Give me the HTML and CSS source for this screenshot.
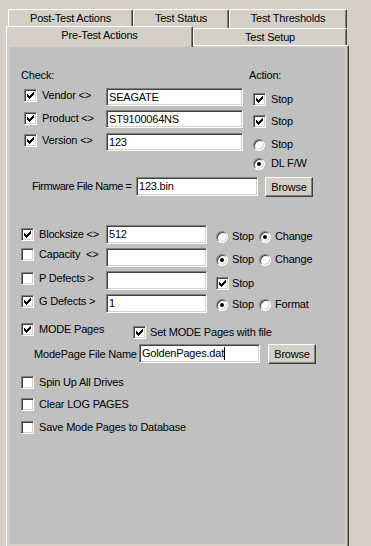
FILE: index.html
```html
<!DOCTYPE html>
<html lang="en">
<head>
    <meta charset="UTF-8">
    <meta name="viewport" content="width=device-width, initial-scale=1.0">
    <title>Pre-Test Actions</title>
    <link rel="stylesheet" href="styles.css">
</head>
<body>
    <!-- tab strip, two rows -->
    <div class="tabs">
        <div class="tabRow backRow">
            <div class="tab tabPost">Post-Test Actions</div>
            <div class="tab tabStatus">Test Status</div>
            <div class="tab tabThresh">Test Thresholds</div>
        </div>
        <div class="tabRow frontRow">
            <div class="tab tabPre selected">Pre-Test Actions</div>
            <div class="tab tabSetup">Test Setup</div>
        </div>
    </div>

    <div class="panel">
        <div class="inner">

            <!-- inquiry checks -->
            <div class="row head">
                <span class="headCheck">Check:</span>
                <span>Action:</span>
            </div>

            <div class="row idRow h22">
                <div class="chk w82 m1"><span class="cb"><svg class="tick" width="11" height="11" viewBox="0 0 11 11"><path d="M2 4h1v3H2zM3 5h1v3H3zM4 6h1v3H4zM5 5h1v3H5zM6 4h1v3H6zM7 3h1v3H7zM8 2h1v3H8z"/></svg></span>Vendor &lt;&gt;</div>
                <div class="field f137 fh18">SEAGATE</div>
                <div class="chk act m5"><span class="cb"><svg class="tick" width="11" height="11" viewBox="0 0 11 11"><path d="M2 4h1v3H2zM3 5h1v3H3zM4 6h1v3H4zM5 5h1v3H5zM6 4h1v3H6zM7 3h1v3H7zM8 2h1v3H8z"/></svg></span>Stop</div>
            </div>
            <div class="row idRow h23">
                <div class="chk w82 m2"><span class="cb"><svg class="tick" width="11" height="11" viewBox="0 0 11 11"><path d="M2 4h1v3H2zM3 5h1v3H3zM4 6h1v3H4zM5 5h1v3H5zM6 4h1v3H6zM7 3h1v3H7zM8 2h1v3H8z"/></svg></span>Product &lt;&gt;</div>
                <div class="field f137 fh18">ST9100064NS</div>
                <div class="chk act m5"><span class="cb"><svg class="tick" width="11" height="11" viewBox="0 0 11 11"><path d="M2 4h1v3H2zM3 5h1v3H3zM4 6h1v3H4zM5 5h1v3H5zM6 4h1v3H6zM7 3h1v3H7zM8 2h1v3H8z"/></svg></span>Stop</div>
            </div>
            <div class="row idRow h22">
                <div class="chk w82 m1"><span class="cb"><svg class="tick" width="11" height="11" viewBox="0 0 11 11"><path d="M2 4h1v3H2zM3 5h1v3H3zM4 6h1v3H4zM5 5h1v3H5zM6 4h1v3H6zM7 3h1v3H7zM8 2h1v3H8z"/></svg></span>Version &lt;&gt;</div>
                <div class="field f137 fh18">123</div>
                <div class="chk radio act m5"><span class="rb"></span>Stop</div>
            </div>
            <div class="row dlRow h22">
                <div class="chk radio m2"><span class="rb on"></span>DL F/W</div>
            </div>

            <div class="row fwRow h20">
                <span class="w104 m3 narrow">Firmware File Name =</span>
                <div class="field f122 fh19">123.bin</div>
                <button class="btn ml7">Browse</button>
            </div>

            <!-- drive parameters -->
            <div class="devSect">
                <div class="row devRow h23">
                    <div class="chk w85 m3"><span class="cb"><svg class="tick" width="11" height="11" viewBox="0 0 11 11"><path d="M2 4h1v3H2zM3 5h1v3H3zM4 6h1v3H4zM5 5h1v3H5zM6 4h1v3H6zM7 3h1v3H7zM8 2h1v3H8z"/></svg></span>Blocksize &lt;&gt;</div>
                    <div class="field f101 fh19">512</div>
                    <div class="opts m5">
                        <div class="chk radio opt1"><span class="rb"></span>Stop</div>
                        <div class="chk radio opt2"><span class="rb on"></span>Change</div>
                    </div>
                </div>
                <div class="row devRow h23">
                    <div class="chk w85"><span class="cb"></span>Capacity&nbsp; &lt;&gt;</div>
                    <div class="field f101 fh19"></div>
                    <div class="opts m5">
                        <div class="chk radio opt1"><span class="rb on"></span>Stop</div>
                        <div class="chk radio opt2"><span class="rb"></span>Change</div>
                    </div>
                </div>
                <div class="row devRow h23">
                    <div class="chk w85 m1"><span class="cb"></span>P Defects &gt;</div>
                    <div class="field f101 fh19"></div>
                    <div class="opts m6">
                        <div class="chk tight"><span class="cb"><svg class="tick" width="11" height="11" viewBox="0 0 11 11"><path d="M2 4h1v3H2zM3 5h1v3H3zM4 6h1v3H4zM5 5h1v3H5zM6 4h1v3H6zM7 3h1v3H7zM8 2h1v3H8z"/></svg></span>Stop</div>
                    </div>
                </div>
                <div class="row devRow h29">
                    <div class="chk w85 m1"><span class="cb"><svg class="tick" width="11" height="11" viewBox="0 0 11 11"><path d="M2 4h1v3H2zM3 5h1v3H3zM4 6h1v3H4zM5 5h1v3H5zM6 4h1v3H6zM7 3h1v3H7zM8 2h1v3H8z"/></svg></span>G Defects &gt;</div>
                    <div class="field f101 fh19">1</div>
                    <div class="opts m4">
                        <div class="chk radio opt1"><span class="rb on"></span>Stop</div>
                        <div class="chk radio opt2"><span class="rb"></span>Format</div>
                    </div>
                </div>

                <div class="row devRow h21">
                    <div class="chk w112"><span class="cb"><svg class="tick" width="11" height="11" viewBox="0 0 11 11"><path d="M2 4h1v3H2zM3 5h1v3H3zM4 6h1v3H4zM5 5h1v3H5zM6 4h1v3H6zM7 3h1v3H7zM8 2h1v3H8z"/></svg></span>MODE Pages</div>
                    <div class="chk g4 m3"><span class="cb"><svg class="tick" width="11" height="11" viewBox="0 0 11 11"><path d="M2 4h1v3H2zM3 5h1v3H3zM4 6h1v3H4zM5 5h1v3H5zM6 4h1v3H6zM7 3h1v3H7zM8 2h1v3H8z"/></svg></span>Set MODE Pages with file</div>
                </div>
                <div class="row modeFileRow h21">
                    <span class="w105 m4">ModePage File Name</span>
                    <div class="field f121 fh19">GoldenPages.dat<span class="caret"></span></div>
                    <button class="btn ml8">Browse</button>
                </div>

                <div class="row devRow h22 spin">
                    <div class="chk"><span class="cb"></span>Spin Up All Drives</div>
                </div>
                <div class="row devRow h23">
                    <div class="chk"><span class="cb"></span>Clear LOG PAGES</div>
                </div>
                <div class="row devRow h23">
                    <div class="chk"><span class="cb"></span>Save Mode Pages to Database</div>
                </div>
            </div>

        </div>
    </div>
</body>
</html>
```

FILE: styles.css
```css
body {
    margin: 0;
    height: 546px;
    overflow: hidden;
    background: #d4d0c8;
    color: #000;
    font: 11px "Liberation Sans", Arial, sans-serif;
    letter-spacing: -0.2px;
}

/* tabs */
.tabs {
    padding-top: 9px;
}
.tabRow {
    display: flex;
}
.backRow {
    padding-left: 8px;
    height: 19px;
}
.frontRow {
    padding-left: 6px;
    height: 19px;
    margin-top: -2px;
    align-items: flex-end;
}
.tab {
    box-sizing: border-box;
    background: #d4d0c8;
    border: 1px solid #fff;
    border-right-color: #404040;
    border-bottom: none;
    border-radius: 2px 2px 0 0;
    box-shadow: inset -1px 0 #808080;
    text-align: center;
    line-height: 13px;
    white-space: nowrap;
}
.backRow .tab {
    height: 19px;
    padding-top: 2px;
}
.tabPost { width: 125px; }
.tabStatus { width: 96px; }
.tabThresh { width: 118px; }
.tabPre {
    width: 187px;
    height: 21px;
    padding-top: 2px;
    margin-bottom: -2px;
    position: relative;
    z-index: 1;
}
.tabSetup {
    width: 154px;
    height: 17px;
    padding-top: 2px;
}

/* page frame */
.panel {
    margin-left: 6px;
    width: 343px;
    box-sizing: border-box;
    border-top: 1px solid #fff;
    border-left: 1px solid #fff;
    border-right: 1px solid #404040;
    box-shadow: inset -1px 0 #808080;
    padding: 1px 3px 3px 3px;
}
.inner {
    background: #c0c0c0;
    height: 497px;
    box-sizing: border-box;
    padding-top: 21px;
}

/* rows */
.row {
    display: flex;
    align-items: flex-start;
    white-space: nowrap;
}
.h20 { height: 20px; }
.h21 { height: 21px; }
.h22 { height: 22px; }
.h23 { height: 23px; }
.h29 { height: 29px; }
.m1 { margin-top: 1px; }
.m2 { margin-top: 2px; }
.m3 { margin-top: 3px; }
.m4 { margin-top: 4px; }
.m5 { margin-top: 5px; }
.m6 { margin-top: 6px; }
.ml7 { margin-left: 7px; }
.ml8 { margin-left: 8px; }

.head {
    height: 20px;
    padding-left: 11px;
    line-height: 13px;
}
.head span { margin-top: 1px; }
.headCheck { width: 228px; }

.idRow { padding-left: 14px; }
.dlRow { padding-left: 243px; }
.fwRow { padding-left: 22px; line-height: 13px; }
.devSect { margin-top: 28px; }
.devRow { padding-left: 11px; }
.modeFileRow { padding-left: 24px; line-height: 13px; }
.spin { margin-top: 11px; }
.narrow { letter-spacing: -0.45px; }

.w82 { width: 82px; }
.w85 { width: 85px; }
.w104 { width: 104px; }
.w105 { width: 105px; }
.w112 { width: 112px; }

/* checkbox / radio with label */
.chk {
    display: flex;
    align-items: center;
    gap: 5px;
    line-height: 13px;
}
.chk.radio { gap: 6px; }
.chk.tight { gap: 3px; }
.chk.g4 { gap: 4px; }
.act { margin-left: 10px; }

.cb {
    flex: none;
    width: 13px;
    height: 13px;
    box-sizing: border-box;
    background: #fff;
    border: 1px solid;
    border-color: #808080 #fff #fff #808080;
    box-shadow: inset 1px 1px #404040, inset -1px -1px #d4d0c8;
    display: flex;
    align-items: center;
    justify-content: center;
}
.tick {
    display: block;
    fill: #000;
    shape-rendering: crispEdges;
}
.rb {
    flex: none;
    width: 12px;
    height: 12px;
    box-sizing: border-box;
    border-radius: 50%;
    background: #fff;
    border: 1px solid;
    border-color: #808080 #fff #fff #808080;
    box-shadow: inset 1px 1px #404040, inset -1px -1px #d4d0c8;
    display: flex;
    align-items: center;
    justify-content: center;
}
.rb.on::after {
    content: "";
    width: 4px;
    height: 4px;
    border-radius: 50%;
    background: #000;
}

.opts {
    display: flex;
    margin-left: 9px;
}
.opts .chk.radio { gap: 4px; }
.opt1 { width: 43px; }
.opts .opt2 { gap: 5px; }

/* text boxes */
.field {
    box-sizing: border-box;
    background: #fff;
    border: 1px solid;
    border-color: #808080 #fff #fff #808080;
    box-shadow: inset 1px 1px #404040, inset -1px -1px #d4d0c8;
    padding: 0 2px;
    display: flex;
    align-items: center;
    overflow: hidden;
}
.fh18 { height: 18px; line-height: 16px; }
.fh19 { height: 19px; line-height: 17px; }
.f101 { width: 101px; }
.f121 { width: 121px; }
.f122 { width: 122px; }
.f137 { width: 137px; }
.caret {
    display: inline-block;
    width: 1px;
    height: 13px;
    background: #000;
}

.btn {
    width: 48px;
    height: 20px;
    box-sizing: border-box;
    padding: 0;
    font: inherit;
    letter-spacing: inherit;
    color: #000;
    background: #d4d0c8;
    border: 1px solid;
    border-color: #fff #404040 #404040 #fff;
    border-radius: 0;
    box-shadow: inset -1px -1px #808080;
    line-height: 18px;
    text-align: center;
}
```
